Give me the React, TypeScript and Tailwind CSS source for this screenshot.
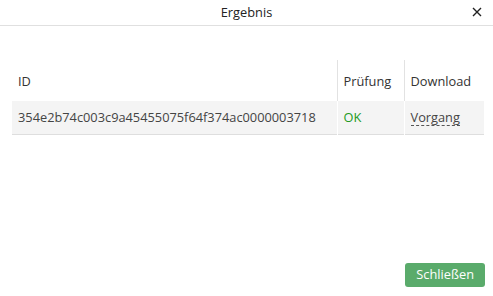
import React from "react";

export default function App() {
  return (
    <div
      className="w-[493px] h-[296px] bg-white flex flex-col text-[#333]"
      style={{ fontFamily: '"Open Sans", sans-serif' }}
    >
      <div className="h-[26px] border-b border-[#e0e0e0] flex items-center justify-center relative">
        <span className="text-[12.8px] text-[#222]">Ergebnis</span>
        <span className="absolute right-[10px] top-[6px] text-[#222]">
          <svg width="12" height="12" viewBox="0 0 12 12">
            <path d="M2 2 L10 10 M10 2 L2 10" stroke="#222" strokeWidth="1.4" />
          </svg>
        </span>
      </div>
      <div className="px-[12px] pt-[34px] flex-1">
        <table className="w-[472px] border-collapse text-[12.8px] table-fixed">
          <thead>
            <tr className="h-[41px]">
              <th className="text-left font-normal pl-[6px] pt-[2px] align-middle w-[325px]">ID</th>
              <th className="text-left font-normal pl-[6px] pt-[2px] border-l border-[#e2e2e2] w-[67px]">Prüfung</th>
              <th className="text-left font-normal pl-[6px] pt-[2px] border-l border-[#e2e2e2]">Download</th>
            </tr>
          </thead>
          <tbody>
            <tr className="h-[33px] bg-[#f4f4f4] border-b border-[#dedede]">
              <td className="pl-[6px] text-[#444] whitespace-nowrap">354e2b74c003c9a45455075f64f374ac0000003718</td>
              <td className="pl-[6px] border-l border-white text-[#239a23]">OK</td>
              <td className="pl-[6px] border-l border-white">
                <span className="border-b border-dashed border-[#555] leading-[16px] inline-block text-[#444]">Vorgang</span>
              </td>
            </tr>
          </tbody>
        </table>
      </div>
      <div className="flex justify-end pr-[8px] pb-[9px]">
        <button className="h-[24px] px-[11px] rounded-[3px] bg-[#5aab6b] text-white text-[12.8px]">
          Schließen
        </button>
      </div>
    </div>
  );
}
